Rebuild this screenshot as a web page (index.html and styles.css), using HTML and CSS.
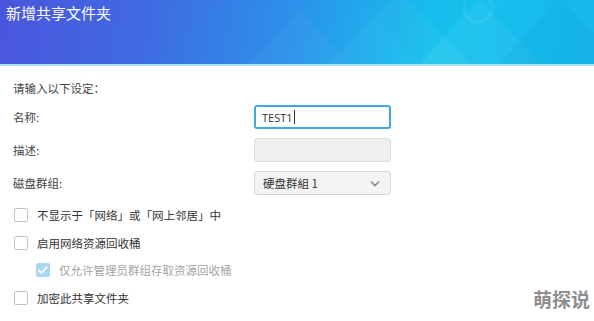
FILE: index.html
```html
<!DOCTYPE html>
<html lang="zh">
<head>
<meta charset="utf-8">
<link rel="stylesheet" href="styles.css">
</head>
<body>
<div class="dialog">
  <header class="header">
    <svg class="deco" width="594" height="64" viewBox="0 0 594 64" preserveAspectRatio="none">
      <polygon points="330,64 400,-10 470,64" fill="#ffffff" opacity="0.04"/>
      <polygon points="420,64 480,0 540,64" fill="#ffffff" opacity="0.05"/>
      <polygon points="500,64 560,-5 620,64" fill="#0a7fc9" opacity="0.1"/>
      <polygon points="250,64 300,10 350,64" fill="#ffffff" opacity="0.03"/>
      <polygon points="360,0 420,64 470,0" fill="#0b6fc0" opacity="0.05"/>
      <circle cx="478" cy="8" r="14" fill="none" stroke="#ffffff" stroke-opacity="0.07" stroke-width="3"/>
    </svg>
    <h1 class="title">新增共享文件夹</h1>
  </header>
  <main class="content">
    <p class="intro">请输入以下设定：</p>
    <div class="form">
      <label class="label">名称:</label>
      <div class="input active">TEST1<span class="caret"></span></div>
      <label class="label">描述:</label>
      <div class="input disabled"></div>
      <label class="label">磁盘群组:</label>
      <div class="input select">
        <span>硬盘群組 1</span>
        <svg width="10" height="7" viewBox="0 0 10 7"><path d="M1 1.5 L5 5.5 L9 1.5" fill="none" stroke="#8a8a8a" stroke-width="1.6"/></svg>
      </div>
    </div>
    <ul class="checks">
      <li class="check"><span class="box"></span>不显示于「网络」或「网上邻居」中</li>
      <li class="check"><span class="box"></span>启用网络资源回收桶</li>
      <li class="check sub"><span class="box checked"><svg width="12" height="10" viewBox="0 0 12 10"><path d="M1.5 5 L4.5 8 L10.5 1.5" fill="none" stroke="#fff" stroke-width="1.8"/></svg></span>仅允许管理员群组存取资源回收桶</li>
      <li class="check"><span class="box"></span>加密此共享文件夹</li>
    </ul>
  </main>
  <div class="watermark">萌探说</div>
</div>
</body>
</html>
```
FILE: styles.css
```css
* { box-sizing: border-box; }
html, body { margin: 0; padding: 0; }
body {
  width: 594px;
  height: 321px;
  overflow: hidden;
  background: #ffffff;
  font-family: "Noto Sans CJK SC", "Noto Sans", sans-serif;
  color: #333333;
}
.dialog { position: relative; width: 594px; height: 321px; }
.header {
  position: relative;
  height: 66px;
  background: linear-gradient(100deg, #4b55dd 0%, #3f6be2 25%, #2b93ea 50%, #16c3ef 72%, #17b8ea 100%);
  border-bottom: 2px solid #a6e4f7;
  overflow: hidden;
}
.deco { position: absolute; left: 0; top: 0; }
.title {
  position: relative;
  margin: 0;
  padding: 3px 0 0 6px;
  font-size: 15px;
  font-weight: 400;
  color: #ffffff;
  line-height: 20px;
}
.content { padding: 14px 0 0 13px; }
.intro { margin: 0; font-size: 11.5px; line-height: 17px; color: #444; }
.form {
  display: grid;
  grid-template-columns: 241px 137px;
  row-gap: 9px;
  margin-top: 8px;
  align-items: center;
}
.label { font-size: 11.5px; color: #444; line-height: 24px; }
.input {
  height: 24px;
  border: 1px solid #d5d5d5;
  border-radius: 3px;
  font-size: 11.5px;
  padding: 0 8px;
  display: flex;
  align-items: center;
  color: #333;
}
.input.active { border: 2px solid #3fa9e0; padding: 0 6px; font-family: "Open Sans", sans-serif; font-size: 11px; }
.caret { display: inline-block; width: 1px; height: 14px; background: #333; margin-left: 1px; }
.input.disabled { background: #efefef; border-color: #dcdcdc; }
.input.select { background: #f3f3f3; justify-content: space-between; padding: 0 10px 0 8px; }
.checks {
  list-style: none;
  margin: 10px 0 0 1px;
  padding: 0;
  display: flex;
  flex-direction: column;
  gap: 7.5px;
}
.check {
  display: flex;
  align-items: center;
  height: 20px;
  font-size: 11.5px;
  color: #333;
}
.check .box {
  width: 14px; height: 14px;
  border: 1px solid #c4c4c4;
  border-radius: 2px;
  background: #fff;
  margin-right: 9px;
  display: flex; align-items: center; justify-content: center;
}
.check.sub { padding-left: 22px; color: #a4a4a4; }
.check .box.checked { background: #a8d8f4; border-color: #a8d8f4; }
.watermark {
  position: absolute;
  right: 4px;
  bottom: 9px;
  font-size: 19px;
  font-weight: 700;
  color: #8f8f8f;
  letter-spacing: 0;
}
```
